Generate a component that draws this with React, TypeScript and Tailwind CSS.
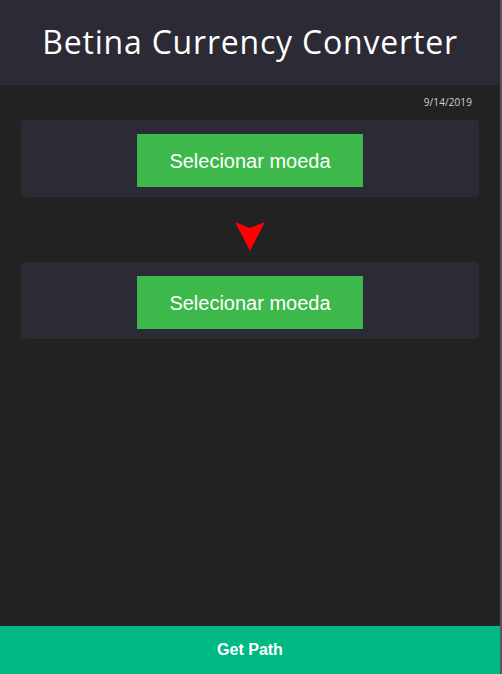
import React from 'react';

const CurrencyPicker: React.FC = () => (
  <div className="bg-[#2b2a35] rounded-[4px] h-[77px] flex justify-center pt-[14px]">
    <button className="bg-[#3cb94a] w-[226px] h-[53px] text-white text-[20px] font-['Liberation_Sans',Arial,sans-serif]">
      Selecionar moeda
    </button>
  </div>
);

const App: React.FC = () => {
  return (
    <div className="h-[674px] w-[502px] bg-[#222222] flex flex-col border-r-2 border-[#55545f] overflow-hidden">
      {/* Header */}
      <header className="h-[85px] bg-[#2b2a35] flex items-center justify-center shrink-0">
        <h1 className="text-white text-[32px] font-['Open_Sans',sans-serif] tracking-[0.8px] pb-[2px]">
          Betina Currency Converter
        </h1>
      </header>

      {/* Content */}
      <main className="flex-1 px-[21px]">
        <div className="flex justify-end pr-[7px] h-[35px] items-center">
          <span className="text-[#d0d0d0] text-[10px] font-['Open_Sans',sans-serif] tracking-[0.1px]">9/14/2019</span>
        </div>
        <CurrencyPicker />
        <div className="flex justify-center pt-[25px] pb-[11px]">
          <svg width="30" height="29" viewBox="0 0 30 29">
            <polygon points="0,0 15,6 30,0 15,29" fill="#ff0000" />
          </svg>
        </div>
        <CurrencyPicker />
      </main>

      {/* Footer */}
      <footer className="h-[48px] bg-[#00b884] flex items-center justify-center shrink-0">
        <span className="text-white font-bold text-[16px] font-['Liberation_Sans',Arial,sans-serif]">Get Path</span>
      </footer>
    </div>
  );
};

export default App;
